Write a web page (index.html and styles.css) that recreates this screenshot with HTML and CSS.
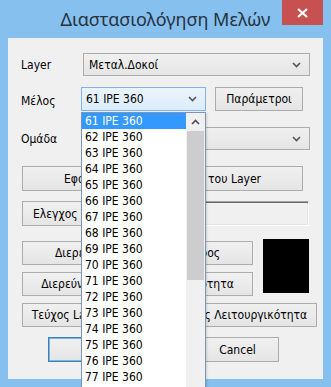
FILE: index.html
```html
<!DOCTYPE html>
<html lang="el">
<head>
  <meta charset="UTF-8" />
  <meta name="viewport" content="width=device-width, initial-scale=1.0" />
  <title>Διαστασιολόγηση Μελών</title>
  <link rel="stylesheet" href="styles.css">
</head>
<body>

  <div class="window">
    <div class="titlebar">
      <span></span>
      <div class="title">Διαστασιολόγηση Μελών</div>
      <button class="close" title="Close">
        <svg width="11" height="10" viewBox="0 0 11 10"><path d="M1 1 L10 9 M10 1 L1 9" stroke="#fff" stroke-width="2.2" fill="none"/></svg>
      </button>
    </div>

    <div class="client">
      <div class="row row-layer">
        <span class="lbl">Layer</span>
        <div class="combo combo-wide">
          <span>Μεταλ.Δοκοί</span>
          <svg class="chev" width="9" height="6" viewBox="0 0 9 6"><path d="M1 1 L4.5 4.5 L8 1" stroke="#555" stroke-width="1.6" fill="none"/></svg>
        </div>
      </div>

      <div class="row row-member">
        <span class="lbl lbl-member">Μέλος</span>
        <div class="combo combo-focus">
          <span>61 IPE 360</span>
          <svg class="chev" width="9" height="6" viewBox="0 0 9 6"><path d="M1 1 L4.5 4.5 L8 1" stroke="#555" stroke-width="1.6" fill="none"/></svg>
        </div>
        <button class="btn btn-params">Παράμετροι</button>
      </div>

      <div class="row row-group">
        <span class="lbl">Ομάδα</span>
        <div class="combo combo-wide">
          <span></span>
          <svg class="chev" width="9" height="6" viewBox="0 0 9 6"><path d="M1 1 L4.5 4.5 L8 1" stroke="#555" stroke-width="1.6" fill="none"/></svg>
        </div>
      </div>

      <button class="btn btn-apply">Εφαρμογή σε όλα τα μέλη του Layer</button>

      <div class="row row-check">
        <button class="btn btn-check">Ελεγχος</button>
        <div class="sunken"></div>
      </div>

      <div class="row row-search">
        <div class="search-btns">
          <button class="btn btn-search1">Διερεύνηση ως προς το Βάρος</button>
          <button class="btn btn-search2">Διερεύνηση βάσει Λειτουργικότητα</button>
        </div>
        <div class="swatch"></div>
      </div>

      <button class="btn btn-report">Τεύχος Layer με Έλεγχο ως προς Λειτουργικότητα</button>

      <div class="row row-actions">
        <button class="btn btn-ok">OK</button>
        <button class="btn btn-cancel">Cancel</button>
      </div>
    </div>

    <div class="droplist">
      <ul class="items">
        <li class="selected">61 IPE 360</li>
        <li>62 IPE 360</li>
        <li>63 IPE 360</li>
        <li>64 IPE 360</li>
        <li>65 IPE 360</li>
        <li>66 IPE 360</li>
        <li>67 IPE 360</li>
        <li>68 IPE 360</li>
        <li>69 IPE 360</li>
        <li>70 IPE 360</li>
        <li>71 IPE 360</li>
        <li>72 IPE 360</li>
        <li>73 IPE 360</li>
        <li>74 IPE 360</li>
        <li>75 IPE 360</li>
        <li>76 IPE 360</li>
        <li>77 IPE 360</li>
        <li>78 IPE 360</li>
      </ul>
      <div class="scrollbar">
        <div class="arrow">
          <svg width="9" height="6" viewBox="0 0 9 6"><path d="M1 5 L4.5 1.5 L8 5" stroke="#505050" stroke-width="1.6" fill="none"/></svg>
        </div>
        <div class="thumb"></div>
      </div>
    </div>
  </div>

</body>
</html>
```

FILE: styles.css
```css
html, body {
  margin: 0;
  padding: 0;
}
body {
  width: 331px;
  height: 387px;
  overflow: hidden;
  background: #86c0ee;
  font-family: 'DejaVu Sans Condensed', 'DejaVu Sans', sans-serif;
  font-size: 12px;
  color: #000;
}
.window {
  position: relative;
  width: 331px;
  height: 387px;
}
.titlebar {
  height: 38px;
  display: grid;
  grid-template-columns: 1fr auto 1fr;
  align-items: start;
}
.title {
  font-family: 'Noto Sans', 'Open Sans', sans-serif;
  font-size: 18px;
  line-height: 24px;
  color: #26323f;
  margin-top: 7px;
  white-space: nowrap;
}
.close {
  justify-self: end;
  margin-right: 8px;
  width: 41px;
  height: 25px;
  border: none;
  padding: 0;
  background: #c75050;
  display: flex;
  align-items: center;
  justify-content: center;
}
.client {
  margin: 0 8px;
  height: 341px;
  background: #f0f0f0;
  display: flex;
  flex-direction: column;
  align-items: flex-start;
}
.row {
  display: flex;
  align-items: center;
}
.lbl {
  padding-left: 13px;
  width: 62px;
}
.lbl-member {
  width: 60px;
  padding-top: 4px;
}
button {
  font-family: inherit;
  font-size: 12px;
  color: #000;
}
.btn {
  background: linear-gradient(#f0f0f0, #e5e5e5);
  border: 1px solid #acacac;
  padding: 0;
  white-space: nowrap;
  overflow: hidden;
}
.combo {
  box-sizing: border-box;
  display: flex;
  align-items: center;
  justify-content: space-between;
  padding: 0 5px 0 5px;
  background: linear-gradient(#f0f0f0, #e5e5e5);
  border: 1px solid #acacac;
}
.combo-wide {
  width: 227px;
  height: 23px;
}
.combo-focus {
  width: 125px;
  height: 24px;
  padding-left: 4px;
  background: linear-gradient(#ebf4fc, #dcecfc);
  border-color: #7eb4ea;
}
.chev {
  margin-right: 3px;
}
.row-layer {
  margin-top: 15px;
}
.row-member {
  margin-top: 11px;
}
.btn-params {
  margin-left: 9px;
  width: 88px;
  height: 24px;
}
.row-group {
  margin-top: 16px;
}
.btn-apply {
  margin: 16px 0 0 14px;
  width: 281px;
  height: 25px;
}
.row-check {
  margin-top: 10px;
  padding-left: 14px;
}
.btn-check {
  width: 66px;
  height: 25px;
  text-align: left;
  padding-left: 10px;
}
.sunken {
  margin-left: 4px;
  width: 215px;
  height: 23px;
  border: 1px solid;
  border-color: #a0a0a0 #fff #fff #a0a0a0;
  box-shadow: inset 1px 1px 0 #696969, inset -1px -1px 0 #e3e3e3;
}
.row-search {
  margin-top: 13px;
  padding-left: 14px;
  align-items: flex-start;
}
.search-btns {
  display: flex;
  flex-direction: column;
  gap: 7px;
  padding-top: 2px;
}
.search-btns .btn {
  width: 231px;
  height: 24px;
}
.swatch {
  margin-left: 10px;
  width: 46px;
  height: 54px;
  background: #000;
}
.btn-report {
  margin: 7px 0 0 14px;
  width: 295px;
  height: 24px;
}
.row-actions {
  margin-top: 10px;
  padding-left: 40px;
  gap: 65px;
}
.row-actions .btn {
  width: 83px;
  height: 25px;
}
.btn-ok {
  border-color: #3c7fb1;
  box-shadow: inset 0 0 0 1px #7eb4ea;
}

/* open drop-down of the Μέλος combo */
.droplist {
  position: absolute;
  left: 81px;
  top: 112px;
  width: 123px;
  height: 290px;
  border: 1px solid #7a96b4;
  background: #fff;
  display: flex;
  box-shadow: 1px 1px 2px rgba(0,0,0,0.15);
}
.items {
  list-style: none;
  margin: 0;
  padding: 0;
  flex: 1;
}
.items li {
  height: 16px;
  line-height: 16px;
  padding-left: 3px;
  white-space: nowrap;
}
.items li.selected {
  background: #3399ff;
  color: #fff;
}
.scrollbar {
  width: 19px;
  background: #f0f0f0;
  display: flex;
  flex-direction: column;
}
.arrow {
  height: 17px;
  display: flex;
  align-items: center;
  justify-content: center;
}
.thumb {
  margin: 1px 1px 0 1px;
  height: 149px;
  background: #cdcdcd;
}
```
